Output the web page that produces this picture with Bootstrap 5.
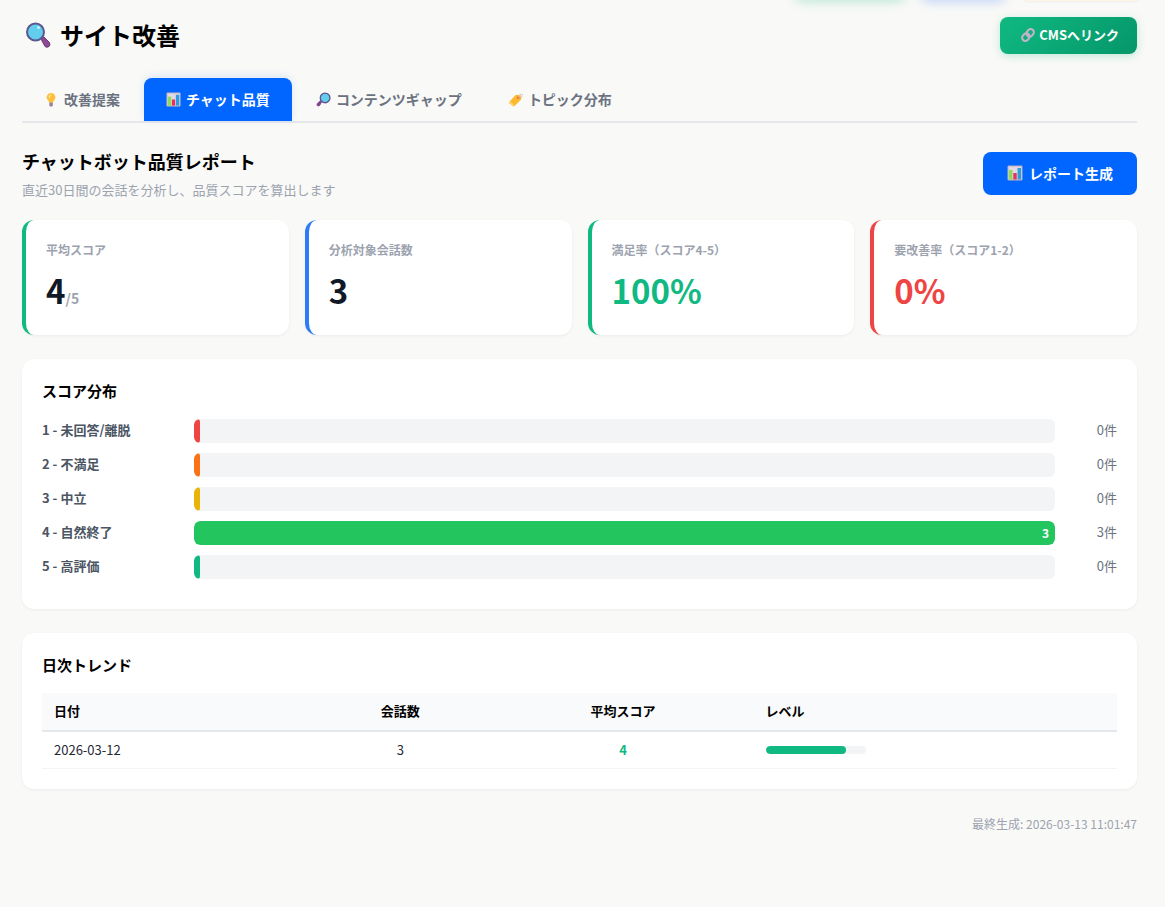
<!DOCTYPE html>
<html lang="ja">
<head>
<meta charset="utf-8">
<meta name="viewport" content="width=device-width, initial-scale=1">
<title>サイト改善</title>
<link href="https://cdn.jsdelivr.net/npm/bootstrap@5.3.0/dist/css/bootstrap.min.css" rel="stylesheet">
<style>
  body { background: #f9f9f7; color: #000; font-family: "Noto Sans CJK JP", sans-serif; font-size: 13px; line-height: 20px; }
  .page-shell { padding: 0 28px 24px 22px; }
  .ico { display: inline-block; width: 16px; height: 16px; flex: none; }
  .ico-tab { width: 15px; height: 15px; }
  .ico-lg { width: 28px; height: 28px; }

  /* Toolbar that has scrolled out above the page title */
  .top-actions { height: 1px; gap: 16px; }
  .top-actions span { height: 36px; border-radius: 8px; flex: none; }
  .peek-green { width: 110px; margin-bottom: 4px; box-shadow: 0 4px 12px rgba(16,185,129,.3); }
  .peek-blue { width: 84px; margin-bottom: 4px; box-shadow: 0 4px 12px rgba(59,130,246,.35); }
  .peek-cream { width: 120px; background: #fff7e6; box-shadow: 0 1px 3px rgba(0,0,0,.05); }

  .page-title { font-size: 24px; line-height: 36px; font-weight: 700; gap: 8px; padding: 0 2px 1px; }
  .btn-cms, .btn-report { color: #fff; font-weight: 700; border: 0; border-radius: 8px; display: flex; align-items: center; }
  .btn-cms { font-size: 13px; line-height: 20px; padding: 8px 18px 9px 20px; gap: 3px; background: linear-gradient(135deg, #10b981, #059669); box-shadow: 0 2px 8px rgba(16,185,129,.25); }
  .btn-report { font-size: 14px; line-height: 20px; padding: 11px 24px 12px; gap: 6px; background: #0066ff; }
  .btn-cms:hover, .btn-report:hover { color: #fff; }
  .btn-report:hover { background: #0057db; }

  .tab-strip { gap: 2px; border-bottom: 2px solid #e5e7eb; margin-top: 24px; }
  .tab-strip .nav-link { display: flex; align-items: center; gap: 5px; padding: 11px 22px 12px; font-size: 14px; line-height: 20px; font-weight: 600; color: #6b7280; background: none; border: 0; border-radius: 8px 8px 0 0; }
  .tab-strip .nav-link.active { background: #0066ff; color: #fff; font-weight: 700; box-shadow: 0 -2px 8px rgba(0,102,255,.12); }

  .report-head { margin: 24px 0 20px; }
  .report-title { font-size: 18px; line-height: 28px; font-weight: 700; margin: 0 0 5px; }
  .muted { color: #9ca3af; }
  .stat-grid { display: grid; grid-template-columns: repeat(4, minmax(0, 1fr)); gap: 16px; }
  .stat-box { background: #fff; border-left: 4px solid; border-radius: 12px; padding: 20px 20px 21px; box-shadow: 0 1px 3px rgba(0,0,0,.06); }
  .stat-label { font-size: 12px; line-height: 20px; font-weight: 600; margin-bottom: 6px; }
  .stat-num { font-size: 33px; line-height: 48px; font-weight: 700; color: #111827; }
  .stat-num small { font-size: 14px; line-height: 14px; font-weight: 700; }
  .edge-green { border-color: #10b981; } .edge-blue { border-color: #2f7bf6; } .edge-red { border-color: #ef4444; }
  .stat-num.c-green, .c-green { color: #10b981; } .stat-num.c-red { color: #ef4444; }

  .panel { background: #fff; border-radius: 12px; padding: 20px; margin-top: 24px; box-shadow: 0 1px 3px rgba(0,0,0,.06); }
  .panel h3 { font-size: 15px; line-height: 24px; font-weight: 700; margin: 0 0 16px; }
  .score-row { gap: 12px; margin-bottom: 10px; height: 24px; }
  .score-name { width: 140px; flex: none; font-weight: 600; color: #4b5563; }
  .score-count { width: 50px; flex: none; text-align: right; color: #6b7280; }
  .score-name, .score-count { line-height: 22px; padding-bottom: 2px; }
  .score-row .progress { height: 24px; border-radius: 6px; background: #f3f4f6; }
  .score-row .progress-bar { min-width: 6px; border-radius: 6px; font-size: 12px; font-weight: 700; text-align: right; padding: 0; }
  .score-row .progress-bar.filled { padding-right: 6px; }
  .bg-s1 { background: #ef4444; } .bg-s2 { background: #f97316; } .bg-s3 { background: #eab308; } .bg-s4 { background: #22c55e; } .bg-s5 { background: #10b981; }

  .trend { font-size: 13px; width: 100%; }
  .trend th { font-weight: 700; background: #f9fafb; border-bottom: 2px solid #e5e7eb; padding: 8px 12px 9px; }
  .trend td { border-bottom: 1px solid #f3f4f6; padding: 8px 12px; color: #1f2937; }
  .trend .c-green { color: #10b981; font-weight: 700; }
  .trend .progress { width: 100px; height: 8px; border-radius: 4px; background: #f3f4f6; }
  .trend .progress-bar { border-radius: 4px; }
  .stamp { font-size: 12px; margin-top: 25px; }
</style>
</head>
<body>
<svg class="d-none" aria-hidden="true">
  <symbol id="i-lens" viewBox="0 0 28 28">
    <path d="M17 18l3-2 5 5q2 3 0 4.500t-4 0z" fill="#8b4a92" stroke="#6b3b7c"/>
    <circle cx="11.500" cy="11" r="8.500" fill="#62cdec" stroke="#5b5790" stroke-width="2"/>
    <circle cx="14.500" cy="6.500" r="1.500" fill="#c9f2ff"/>
  </symbol>
  <symbol id="i-lens-r" viewBox="0 0 28 28"><g transform="translate(28 0) scale(-1 1)">
    <path d="M17 18l3-2 6 6q1 3-1 4t-4-1z" fill="#8b3f92" stroke="#6b3b7c"/>
    <circle cx="11" cy="11" r="9" fill="#62cdec" stroke="#5b5790" stroke-width="2.500"/></g>
  </symbol>
  <symbol id="i-bulb" viewBox="0 0 16 16">
    <path d="M7.500 1a4.700 4.700 0 0 0-4.700 4.700c0 2.600 2.200 3.300 2.700 5.800h4c.5-2.500 2.700-3.200 2.700-5.800A4.700 4.700 0 0 0 7.500 1z" fill="#fcc03c"/>
    <path d="M5 4.500q1-2 3-2-2 3-2 5z" fill="#ffe69a"/>
    <path d="M5.700 11.300h3.700v2.700L8.500 15.500h-2L5.700 14z" fill="#9a8298"/>
  </symbol>
  <symbol id="i-chart" viewBox="0 0 16 16">
    <path d="M1 1h14v14H1z" fill="#e3d9e5" stroke="#b8aebb"/>
    <path d="M2 5h3.500v9.500H2z" fill="#8bdc55"/><path d="M6.300 8h3.400v6.500H6.300z" fill="#e92f60"/><path d="M10.500 3H14v11.500h-3.500z" fill="#2b9ee0"/>
  </symbol>
  <symbol id="i-tag" viewBox="0 0 16 16">
    <path d="M1.500 10.500L8 3.300l5.500-.5.700 5L7 15q-1 .6-2 0l-3.500-3q-.6-.8 0-1.500z" fill="#fcb92f"/>
    <path d="M2 10.500l4 4" stroke="#ffd36a" stroke-width="2"/>
    <circle cx="10.800" cy="5.800" r="1.300" fill="#e96643"/>
    <path d="M10.800 5.800q1.500-4 4-3.500t-1 4.200" fill="none" stroke="#d9c7d8"/>
  </symbol>
  <symbol id="i-link" viewBox="0 0 16 16"><g fill="none" stroke="#c5b3c9" stroke-width="2" transform="rotate(-45 8 8)">
    <rect x="1" y="4.800" width="8" height="6.400" rx="3.200"/><rect x="7" y="4.800" width="8" height="6.400" rx="3.200"/></g>
  </symbol>
</svg>

<div class="top-actions d-flex justify-content-end align-items-end pe-4" aria-hidden="true">
  <span class="peek-green"></span><span class="peek-blue"></span><span class="peek-cream"></span>
</div>
<main class="page-shell">
  <header class="d-flex justify-content-between align-items-center pt-3">
    <h1 class="page-title d-flex align-items-center m-0"><svg class="ico ico-lg"><use href="#i-lens"/></svg>サイト改善</h1>
    <button type="button" class="btn btn-cms"><svg class="ico"><use href="#i-link"/></svg>CMSへリンク</button>
  </header>

  <nav class="tab-strip nav" aria-label="サイト改善">
    <button type="button" class="nav-link"><svg class="ico ico-tab"><use href="#i-bulb"/></svg>改善提案</button>
    <button type="button" class="nav-link active"><svg class="ico ico-tab"><use href="#i-chart"/></svg>チャット品質</button>
    <button type="button" class="nav-link"><svg class="ico ico-tab"><use href="#i-lens-r"/></svg>コンテンツギャップ</button>
    <button type="button" class="nav-link"><svg class="ico ico-tab"><use href="#i-tag"/></svg>トピック分布</button>
  </nav>

  <section class="report-head d-flex justify-content-between align-items-center">
    <div>
      <h2 class="report-title">チャットボット品質レポート</h2>
      <p class="muted mb-0">直近30日間の会話を分析し、品質スコアを算出します</p>
    </div>
    <button type="button" class="btn btn-report"><svg class="ico"><use href="#i-chart"/></svg>レポート生成</button>
  </section>

  <section class="stat-grid">
    <div class="stat-box edge-green"><div class="stat-label muted">平均スコア</div><div class="stat-num">4<small class="muted">/5</small></div></div>
    <div class="stat-box edge-blue"><div class="stat-label muted">分析対象会話数</div><div class="stat-num">3</div></div>
    <div class="stat-box edge-green"><div class="stat-label muted">満足率（スコア4-5）</div><div class="stat-num c-green">100%</div></div>
    <div class="stat-box edge-red"><div class="stat-label muted">要改善率（スコア1-2）</div><div class="stat-num c-red">0%</div></div>
  </section>

  <section class="panel">
    <h3>スコア分布</h3>
    <div class="score-row d-flex align-items-center"><span class="score-name">1 - 未回答/離脱</span><div class="progress flex-grow-1"><div class="progress-bar bg-s1" style="width:0%"></div></div><span class="score-count">0件</span></div>
    <div class="score-row d-flex align-items-center"><span class="score-name">2 - 不満足</span><div class="progress flex-grow-1"><div class="progress-bar bg-s2" style="width:0%"></div></div><span class="score-count">0件</span></div>
    <div class="score-row d-flex align-items-center"><span class="score-name">3 - 中立</span><div class="progress flex-grow-1"><div class="progress-bar bg-s3" style="width:0%"></div></div><span class="score-count">0件</span></div>
    <div class="score-row d-flex align-items-center"><span class="score-name">4 - 自然終了</span><div class="progress flex-grow-1"><div class="progress-bar filled bg-s4" style="width:100%">3</div></div><span class="score-count">3件</span></div>
    <div class="score-row d-flex align-items-center"><span class="score-name">5 - 高評価</span><div class="progress flex-grow-1"><div class="progress-bar bg-s5" style="width:0%"></div></div><span class="score-count">0件</span></div>
  </section>

  <section class="panel">
    <h3>日次トレンド</h3>
    <table class="trend">
      <thead><tr><th>日付</th><th class="text-center">会話数</th><th class="text-center">平均スコア</th><th>レベル</th></tr></thead>
      <tbody><tr><td>2026-03-12</td><td class="text-center">3</td><td class="text-center c-green">4</td><td><div class="progress"><div class="progress-bar bg-s5" style="width:80%"></div></div></td></tr></tbody>
    </table>
  </section>

  <p class="stamp muted text-end mb-0">最終生成: 2026-03-13 11:01:47</p>
</main>
<script src="https://cdn.jsdelivr.net/npm/bootstrap@5.3.0/dist/js/bootstrap.bundle.min.js"></script>
</body>
</html>
